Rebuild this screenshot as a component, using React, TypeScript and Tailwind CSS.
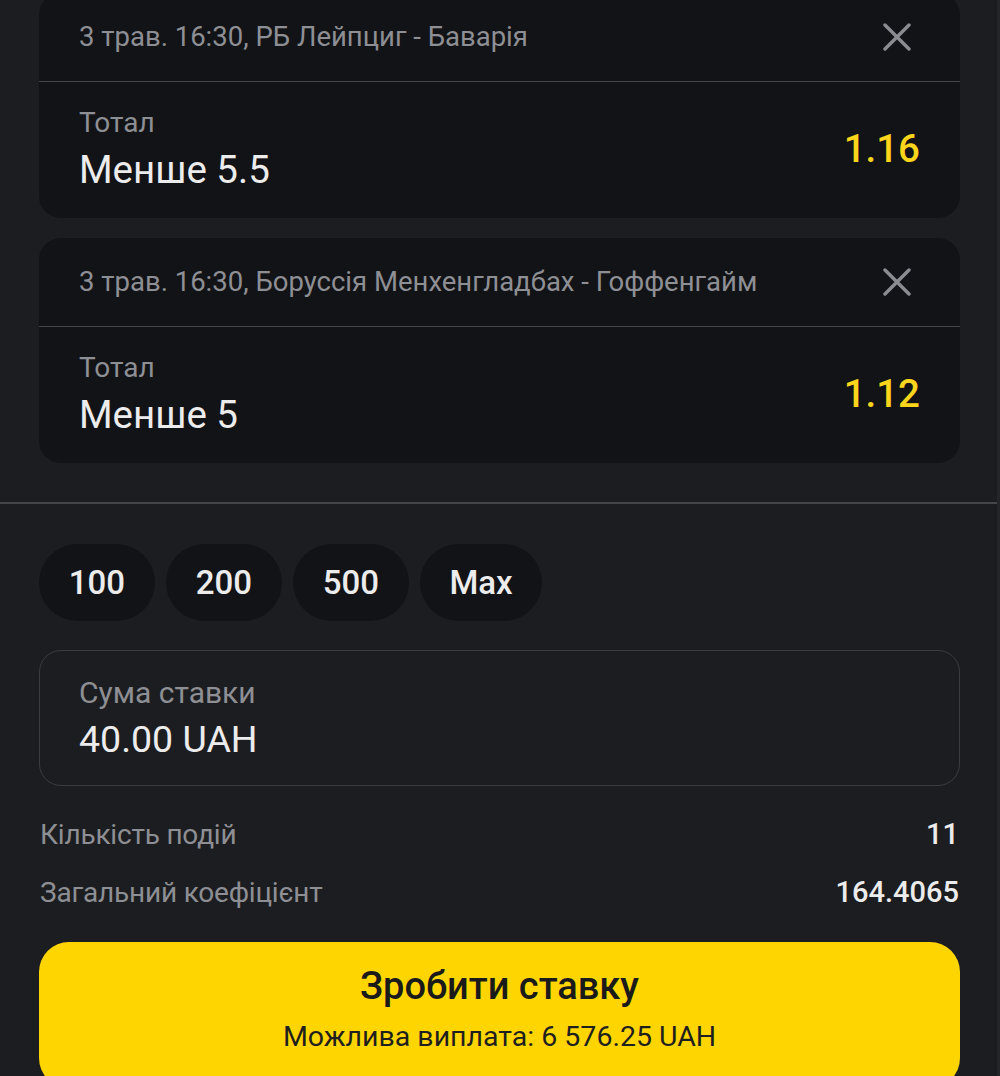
import React from "react";

const font = { fontFamily: "Roboto, 'Noto Sans', sans-serif" };

type Bet = { match: string; market: string; pick: string; odds: string };

const bets: Bet[] = [
  { match: "3 трав. 16:30, РБ Лейпциг - Баварія", market: "Тотал", pick: "Менше 5.5", odds: "1.16" },
  { match: "3 трав. 16:30, Боруссія Менхенгладбах - Гоффенгайм", market: "Тотал", pick: "Менше 5", odds: "1.12" },
];

const CloseIcon = () => (
  <svg width="28" height="28" viewBox="0 0 28 28" fill="none">
    <path d="M2 2L26 26M26 2L2 26" stroke="#8b8c91" strokeWidth="3.4" strokeLinecap="round" />
  </svg>
);

const BetCard = ({ bet }: { bet: Bet }) => (
  <div className="bg-[#121316] rounded-[22px] ml-[39px] mr-[40px] overflow-hidden">
    {/* header */}
    <div className="h-[89px] flex items-center justify-between pl-[40px] pr-[49px] border-b border-[#46474b]">
      <span className="text-[27.5px] leading-[34px] text-[#8e8f94]">{bet.match}</span>
      <CloseIcon />
    </div>
    {/* body */}
    <div className="flex items-center justify-between pl-[40px] pr-[40px] pt-[25px] pb-[27px]">
      <div className="flex flex-col">
        <span className="text-[28px] leading-[32px] text-[#8e8f94]">{bet.market}</span>
        <span className="text-[38.5px] leading-[42px] text-[#ececec] mt-[10px]">{bet.pick}</span>
      </div>
      <span className="text-[38.5px] leading-[44px] font-medium text-[#fad51c]">{bet.odds}</span>
    </div>
  </div>
);

const chips = ["100", "200", "500", "Max"];

export default function App() {
  return (
    <div style={font} className="min-h-screen bg-[#1c1d20] overflow-hidden relative">
      {/* scrollbar strip */}
      <div className="absolute right-0 top-0 bottom-0 w-[3px] bg-[#242528]" />

      <div className="-mt-[7px] flex flex-col gap-[20px]">
        {bets.map((b) => (
          <BetCard key={b.odds} bet={b} />
        ))}
      </div>

      <div className="mt-[39px] h-[2px] bg-[#45464a]" />

      {/* quick amounts */}
      <div className="flex gap-[11px] ml-[39px] mt-[40px]">
        {chips.map((c) => (
          <button
            key={c}
            className={`h-[77px] ${c === "Max" ? "w-[122px]" : "w-[116px]"} rounded-full bg-[#121316] text-[33px] font-medium text-[#ececec]`}
          >
            {c}
          </button>
        ))}
      </div>

      {/* stake input */}
      <div className="ml-[39px] mr-[40px] mt-[29px] h-[136px] rounded-[22px] border-[1.5px] border-[#3b3c40] px-[39px] pt-[25px] flex flex-col">
        <span className="text-[30px] leading-[34px] text-[#8e8f94]">Сума ставки</span>
        <span className="text-[37.5px] leading-[44px] text-[#ececec] mt-[7px]">40.00 UAH</span>
      </div>

      {/* summary */}
      <div className="ml-[40px] mr-[41px] mt-[32px] flex flex-col gap-[24px]">
        <div className="flex justify-between items-center h-[34px]">
          <span className="text-[28px] text-[#8e8f94] tracking-[-0.2px]">Кількість подій</span>
          <span className="text-[29px] font-medium text-[#ececec]">11</span>
        </div>
        <div className="flex justify-between items-center h-[34px]">
          <span className="text-[28px] text-[#8e8f94] tracking-[-0.2px]">Загальний коефіцієнт</span>
          <span className="text-[29px] font-medium text-[#ececec]">164.4065</span>
        </div>
      </div>

      {/* place bet */}
      <button className="ml-[39px] mr-[40px] mt-[32px] w-[921px] h-[146px] rounded-[30px] bg-[#ffd500] flex flex-col items-center pt-[22px]">
        <span className="text-[38px] leading-[44px] font-medium text-[#1a1a1a]">Зробити ставку</span>
        <span className="text-[28.5px] leading-[34px] text-[#1f1f1f] mt-[12px]">Можлива виплата: 6 576.25 UAH</span>
      </button>
    </div>
  );
}
